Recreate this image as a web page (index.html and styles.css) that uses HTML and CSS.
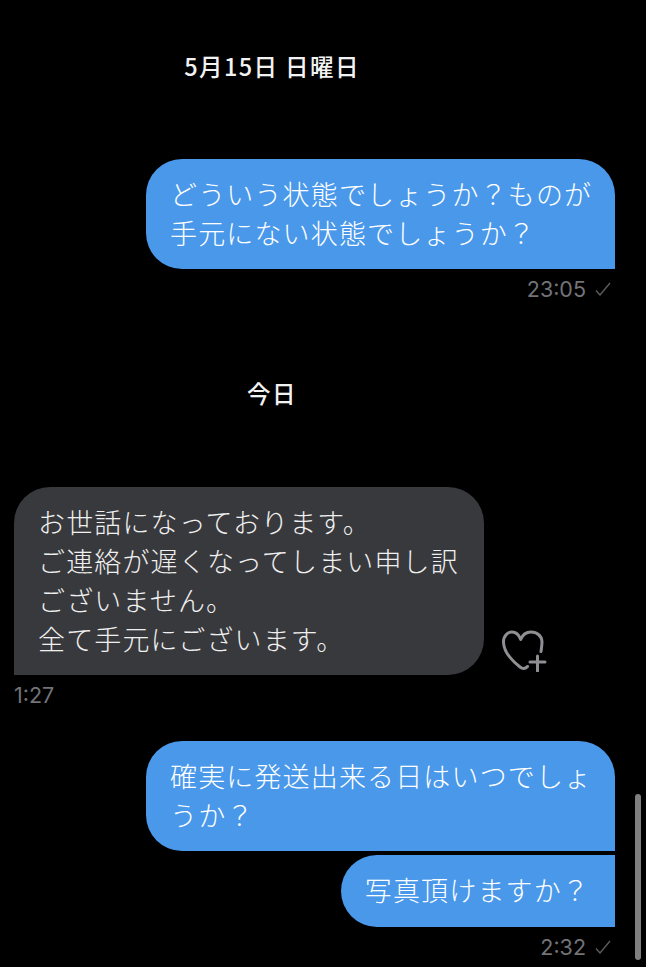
FILE: index.html
```html
<!DOCTYPE html>
<html lang="ja">
<head>
<meta charset="utf-8">
<title>Chat</title>
<link rel="stylesheet" href="styles.css">
</head>
<body>
<main class="chat">
  <div class="date date-first">5月15日 日曜日</div>

  <div class="row row-out row-first">
    <div class="bubble bubble-out bubble-tail-out">どういう状態でしょうか？ものが<br>手元にない状態でしょうか？</div>
  </div>
  <div class="meta meta-out"><span>23:05</span>
    <svg class="check" viewBox="0 0 16 14" aria-hidden="true"><path d="M1 8.500 5 13 15 1"/></svg>
  </div>

  <div class="date date-today">今日</div>

  <div class="row row-in">
    <div class="bubble bubble-in">お世話になっております。<br>ご連絡が遅くなってしまい申し訳<br>ございません。<br>全て手元にございます。</div>
    <svg class="heart" viewBox="0 0 46 42" aria-hidden="true">
      <path d="M25.500 36.500C23.500 39 20.500 39 18 37C11 31.500 1.500 23 1.500 12C1.500 6 5.500 2 10 2C14 2 17 5 18.700 9.500C20.500 5 24 2 29 2C35 2 40 6 40 12C40 15 39.500 18 39 21.500"/>
      <path d="M28 32H43M35.500 26V41"/>
    </svg>
  </div>
  <div class="meta meta-in">1:27</div>

  <div class="row row-out row-third">
    <div class="bubble bubble-out bubble-tail-out">確実に発送出来る日はいつでしょ<br>うか？</div>
  </div>
  <div class="row row-out row-fourth">
    <div class="bubble bubble-out bubble-single">写真頂けますか？</div>
  </div>
  <div class="meta meta-out meta-last"><span>2:32</span>
    <svg class="check" viewBox="0 0 16 14" aria-hidden="true"><path d="M1 8.500 5 13 15 1"/></svg>
  </div>
</main>
<div class="scrollbar"></div>
</body>
</html>
```
FILE: styles.css
```css
html, body {
  margin: 0;
  padding: 0;
  background: #000;
}
body {
  width: 646px;
  height: 967px;
  overflow: hidden;
  position: relative;
  font-family: "Noto Sans CJK JP", "Liberation Sans", sans-serif;
}
.chat {
  display: flex;
  flex-direction: column;
  padding: 0 31px 0 14px;
}
.date {
  width: 516px;
  text-align: center;
  color: #f2f2f2;
  font-size: 23.5px;
  letter-spacing: 1.4px;
  font-weight: 500;
  line-height: 30px;
}
.date-first { margin-top: 51px; }
.date-today { margin-top: 75px; }
.row { display: flex; }
.row-out { justify-content: flex-end; }
.row-first { margin-top: 78px; }
.row-in { margin-top: 79px; align-items: flex-end; }
.row-third { margin-top: 32px; }
.row-fourth { margin-top: 4px; }
.bubble {
  box-sizing: border-box;
  padding: 15px 24px 17px 24px;
  font-size: 27px;
  line-height: 39px;
  letter-spacing: 1.15px;
  font-weight: 300;
  white-space: nowrap;
}
.bubble-out {
  background: #4a98ea;
  color: #fff;
  border-radius: 36px;
}
.bubble-tail-out {
  width: 469px;
  border-bottom-right-radius: 0;
}
.bubble-single {
  padding-right: 25px;
  padding-bottom: 18px;
  border-top-right-radius: 0;
  border-bottom-right-radius: 0;
}
.bubble-in {
  width: 470px;
  background: #38393d;
  color: #f0f0f0;
  border-radius: 36px;
  border-bottom-left-radius: 0;
}
.heart {
  width: 46px;
  height: 42px;
  margin: 0 0 3px 18px;
  fill: none;
  stroke: #8e8e93;
  stroke-width: 3;
  stroke-linecap: round;
  stroke-linejoin: round;
}
.meta {
  display: flex;
  align-items: center;
  gap: 9px;
  color: #737378;
  font-family: "Inter", "Liberation Sans", sans-serif;
  font-size: 21.5px;
  line-height: 28px;
  margin-top: 6px;
}
.meta-out { justify-content: flex-end; padding-right: 4px; }
.check {
  width: 16px;
  height: 14px;
  fill: none;
  stroke: #5c5c60;
  stroke-width: 1.4;
}
.scrollbar {
  position: absolute;
  left: 635px;
  top: 794px;
  width: 6px;
  height: 166px;
  border-radius: 3px;
  background: #7f7f7f;
}
```
